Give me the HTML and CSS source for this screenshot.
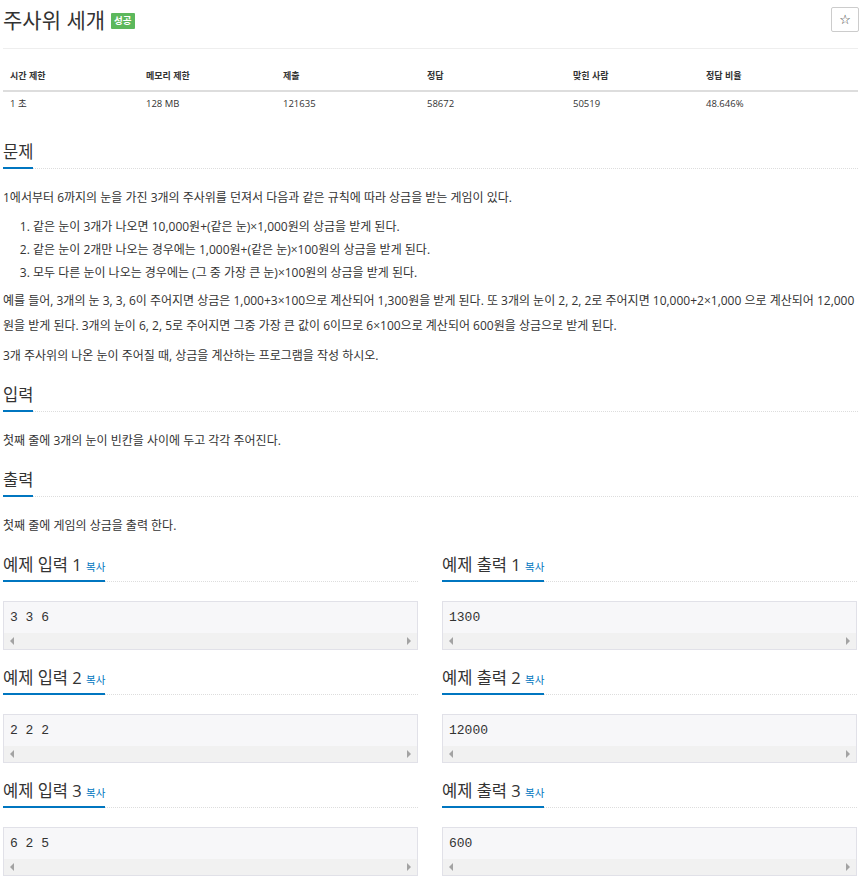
FILE: index.html
```html
<!DOCTYPE html>
<html lang="ko">
<head>
<meta charset="utf-8">
<title>주사위 세개</title>
<link rel="stylesheet" href="styles.css">
</head>
<body>
<div class="page">
  <div class="page-header">
    <div class="title-wrap">
      <h1 class="title">주사위 세개</h1>
      <span class="badge">성공</span>
    </div>
    <button class="star-btn" type="button">☆</button>
  </div>

  <table class="info-table">
    <thead>
      <tr><th>시간 제한</th><th>메모리 제한</th><th>제출</th><th>정답</th><th>맞힌 사람</th><th>정답 비율</th></tr>
    </thead>
    <tbody>
      <tr><td>1 초</td><td>128 MB</td><td>121635</td><td>58672</td><td>50519</td><td>48.646%</td></tr>
    </tbody>
  </table>

  <section class="section">
    <div class="headline"><h2><span class="hl">문제</span></h2></div>
    <div class="text">
      <p>1에서부터 6까지의 눈을 가진 3개의 주사위를 던져서 다음과 같은 규칙에 따라 상금을 받는 게임이 있다.</p>
      <ol>
        <li>같은 눈이 3개가 나오면 10,000원+(같은 눈)×1,000원의 상금을 받게 된다.</li>
        <li>같은 눈이 2개만 나오는 경우에는 1,000원+(같은 눈)×100원의 상금을 받게 된다.</li>
        <li>모두 다른 눈이 나오는 경우에는 (그 중 가장 큰 눈)×100원의 상금을 받게 된다.</li>
      </ol>
      <p>예를 들어, 3개의 눈 3, 3, 6이 주어지면 상금은 1,000+3×100으로 계산되어 1,300원을 받게 된다. 또 3개의 눈이 2, 2, 2로 주어지면 10,000+2×1,000 으로 계산되어 12,000원을 받게 된다. 3개의 눈이 6, 2, 5로 주어지면 그중 가장 큰 값이 6이므로 6×100으로 계산되어 600원을 상금으로 받게 된다.</p>
      <p>3개 주사위의 나온 눈이 주어질 때, 상금을 계산하는 프로그램을 작성 하시오.</p>
    </div>
  </section>

  <section class="section">
    <div class="headline"><h2><span class="hl">입력</span></h2></div>
    <div class="text"><p>첫째 줄에 3개의 눈이 빈칸을 사이에 두고 각각 주어진다.</p></div>
  </section>

  <section class="section">
    <div class="headline"><h2><span class="hl">출력</span></h2></div>
    <div class="text"><p>첫째 줄에 게임의 상금을 출력 한다.</p></div>
  </section>

  <div class="samples">
    <div class="sample">
      <div class="headline"><h2><span class="hl">예제 입력 1 <a class="copy">복사</a></span></h2></div>
      <div class="pre"><div class="pre-text">3 3 6</div><div class="scrollbar"><span class="arr-l"></span><span class="arr-r"></span></div></div>
    </div>
    <div class="sample">
      <div class="headline"><h2><span class="hl">예제 출력 1 <a class="copy">복사</a></span></h2></div>
      <div class="pre"><div class="pre-text">1300</div><div class="scrollbar"><span class="arr-l"></span><span class="arr-r"></span></div></div>
    </div>
    <div class="sample">
      <div class="headline"><h2><span class="hl">예제 입력 2 <a class="copy">복사</a></span></h2></div>
      <div class="pre"><div class="pre-text">2 2 2</div><div class="scrollbar"><span class="arr-l"></span><span class="arr-r"></span></div></div>
    </div>
    <div class="sample">
      <div class="headline"><h2><span class="hl">예제 출력 2 <a class="copy">복사</a></span></h2></div>
      <div class="pre"><div class="pre-text">12000</div><div class="scrollbar"><span class="arr-l"></span><span class="arr-r"></span></div></div>
    </div>
    <div class="sample">
      <div class="headline"><h2><span class="hl">예제 입력 3 <a class="copy">복사</a></span></h2></div>
      <div class="pre"><div class="pre-text">6 2 5</div><div class="scrollbar"><span class="arr-l"></span><span class="arr-r"></span></div></div>
    </div>
    <div class="sample">
      <div class="headline"><h2><span class="hl">예제 출력 3 <a class="copy">복사</a></span></h2></div>
      <div class="pre"><div class="pre-text">600</div><div class="scrollbar"><span class="arr-l"></span><span class="arr-r"></span></div></div>
    </div>
  </div>
</div>
</body>
</html>
```

FILE: styles.css
```css
* { box-sizing: border-box; }
html, body { margin: 0; padding: 0; background: #fff; }
body {
  font-family: "Open Sans", "Noto Sans CJK KR", sans-serif;
  color: #333;
}
.page {
  width: 855px;
  margin-left: 3px;
}
.page-header {
  display: flex;
  justify-content: space-between;
  align-items: center;
  height: 49px;
  padding-top: 7px;
  padding-bottom: 16px;
  border-bottom: 1px solid #eee;
}
.title-wrap {
  display: flex;
  align-items: center;
  gap: 6px;
}
.title {
  margin: 0;
  font-size: 21px;
  line-height: 26px;
  height: 26px;
  font-weight: normal;
  color: #333;
}
.badge {
  display: inline-block;
  background: #5cb85c;
  color: #fff;
  font-size: 9.5px;
  font-weight: bold;
  line-height: 16px;
  height: 16px;
  padding: 0 3px;
  border-radius: 1px;
  margin-top: 3px;
}
.star-btn {
  width: 28px;
  height: 25px;
  margin-right: -1px;
  border: 1px solid #ccc;
  border-radius: 2px;
  background: #fff;
  color: #333;
  font-family: "DejaVu Sans", sans-serif;
  font-size: 13px;
  line-height: 23px;
  padding: 0;
  text-align: center;
}
.info-table {
  width: 855px;
  margin-top: 12px;
  border-collapse: collapse;
  table-layout: fixed;
}
.info-table th, .info-table td {
  text-align: left;
  padding-left: 7px;
  padding-right: 7px;
}
.info-table th {
  font-size: 9px;
  font-weight: bold;
  line-height: 13px;
  height: 29px;
  padding-top: 8px;
  padding-bottom: 8px;
  border-bottom: 2px solid #ddd;
}
.info-table td {
  font-size: 9.5px;
  line-height: 13px;
  height: 25px;
  padding-top: 5px;
  padding-bottom: 7px;
}
.info-table th:nth-child(1) { width: 136px; }
.info-table th:nth-child(2) { width: 137px; }
.info-table th:nth-child(3) { width: 144px; }
.info-table th:nth-child(4) { width: 146px; }
.info-table th:nth-child(5) { width: 133px; }
.info-table th:nth-child(6) { width: 159px; }

.section { margin-top: 23px; }
.section + .section { margin-top: 15px; }
.headline {
  border-bottom: 1px dotted #ddd;
  height: 29px;
}
.headline h2 {
  margin: 0;
  height: 29px;
  font-size: 16.5px;
  line-height: 24px;
  font-weight: normal;
  color: #333;
}
.hl {
  display: inline-block;
  height: 29px;
  padding-bottom: 3px;
  border-bottom: 2px solid #0076c0;
  white-space: nowrap;
}
.copy {
  color: #0076c0;
  font-size: 10.5px;
  text-decoration: none;
}
.text {
  margin-top: 16px;
  font-size: 12px;
  line-height: 25px;
}
.text p { margin: 0 0 5px 0; }
.text ol {
  margin: 0 0 4px 0;
  padding-left: 30px;
  line-height: 23px;
}

.samples {
  display: grid;
  grid-template-columns: 415px 415px;
  column-gap: 24px;
  row-gap: 16px;
  margin-top: 15px;
}
.pre {
  margin-top: 19px;
  height: 49px;
  border: 1px solid #e1e1e8;
  background: #f7f7f9;
}
.pre-text {
  font-family: "Liberation Mono", "DejaVu Sans Mono", monospace;
  font-size: 13px;
  line-height: 13px;
  height: 31px;
  padding: 9px 6px;
  color: #333;
  white-space: pre;
}
.scrollbar {
  height: 16px;
  background: #f1f1f1;
  display: flex;
  justify-content: space-between;
  align-items: center;
  padding: 0 6px;
}
.arr-l, .arr-r {
  width: 0;
  height: 0;
  border-top: 4px solid transparent;
  border-bottom: 4px solid transparent;
}
.arr-l { border-right: 4px solid #a3a3a3; }
.arr-r { border-left: 4px solid #a3a3a3; }
```
